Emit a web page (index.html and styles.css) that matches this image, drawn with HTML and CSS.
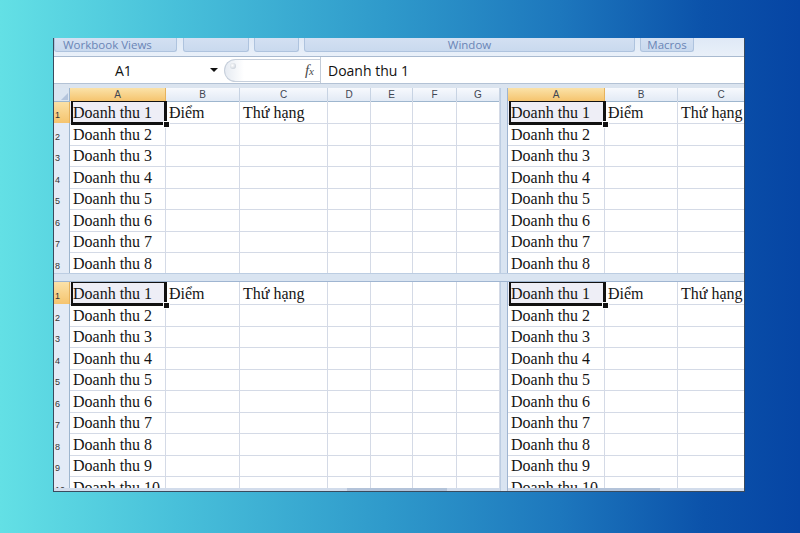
FILE: index.html
```html
<!DOCTYPE html>
<html lang="vi">
<head>
    <meta charset="UTF-8">
    <meta name="viewport" content="width=device-width, initial-scale=1.0">
    <title>Chia cửa sổ Excel</title>
    <link rel="stylesheet" href="styles.css">
</head>
<body>
    <div class="window">
        <div class="ribbon">
            <div class="group g-views">Workbook Views</div>
            <div class="group g-blank1"></div>
            <div class="group g-blank2"></div>
            <div class="group g-window">Window</div>
            <div class="group g-macros">Macros</div>
        </div>

        <div class="formula-bar">
            <div class="name-box">
                <span class="name">A1</span>
                <span class="caret"></span>
            </div>
            <div class="fx-pill">
                <span class="knob"></span>
                <span class="fx">f<small>x</small></span>
            </div>
            <div class="formula">Doanh thu 1</div>
        </div>
        <div class="bar-gap"></div>

        <div class="panes">
            <div class="pane pane-left" id="pane-tl"></div>
            <div class="vsplit"></div>
            <div class="pane pane-right" id="pane-tr"></div>
            <div class="hsplit"></div>
            <div class="pane pane-left" id="pane-bl"></div>
            <div class="vsplit"></div>
            <div class="pane pane-right" id="pane-br"></div>
        </div>

        <div class="hscroll">
            <div class="track track-left"><span class="thumb thumb-left"></span></div>
            <div class="track track-split"></div>
            <div class="track track-right"><span class="thumb thumb-right"></span></div>
        </div>
    </div>

    <script>
        const leftLetters = ['A', 'B', 'C', 'D', 'E', 'F', 'G'];
        const rightLetters = ['A', 'B', 'C'];

        function cellText(row, col) {
            if (col === 0) return 'Doanh thu ' + row;
            if (row === 1 && col === 1) return 'Điểm';
            if (row === 1 && col === 2) return 'Thứ hạng';
            return '';
        }

        function buildPane(id, letters, rowCount, withHeader, withRowHeads) {
            const pane = document.getElementById(id);
            let html = '';

            if (withHeader) {
                html += '<div class="colheads">';
                if (withRowHeads) html += '<div class="corner"></div>';
                letters.forEach((l, i) => {
                    html += `<div class="ch${i === 0 ? ' on' : ''}">${l}</div>`;
                });
                html += '</div>';
            }

            for (let r = 1; r <= rowCount; r++) {
                html += '<div class="row">';
                if (withRowHeads) html += `<div class="rh${r === 1 ? ' on' : ''}">${r}</div>`;
                letters.forEach((l, c) => {
                    const active = r === 1 && c === 0;
                    html += `<div class="cell${active ? ' active' : ''}">${cellText(r, c)}${active ? '<span class="handle"></span>' : ''}</div>`;
                });
                html += '</div>';
            }

            pane.innerHTML = html;
        }

        buildPane('pane-tl', leftLetters, 8, true, true);
        buildPane('pane-tr', rightLetters, 8, true, false);
        buildPane('pane-bl', leftLetters, 10, false, true);
        buildPane('pane-br', rightLetters, 10, false, false);
    </script>
</body>
</html>
```

FILE: styles.css
```css
body {
    margin: 0;
    width: 800px;
    height: 533px;
    overflow: hidden;
    font-family: "Open Sans", "DejaVu Sans", sans-serif;
    background: linear-gradient(90deg, #63e0e5 0%, #48c0da 22%, #2f9acb 48%, #1d77bd 70%, #0b52aa 88%, #0645a4 100%);
}

.window {
    margin: 38px 0 0 53px;
    width: 692px;
    height: 454px;
    box-sizing: border-box;
    border: 1px solid #3a4b5e;
    border-top: none;
    background: #fff;
    display: flex;
    flex-direction: column;
    overflow: hidden;
}

/* ribbon group labels */
.ribbon {
    height: 18px;
    flex-shrink: 0;
    display: flex;
    gap: 5px;
    background: linear-gradient(#dfe9f6, #e9f0f9);
    border-bottom: 1px solid #a9bad0;
}

.group {
    height: 14px;
    box-sizing: border-box;
    border: 1px solid #aec3de;
    border-top: none;
    border-radius: 0 0 3px 3px;
    background: linear-gradient(#d3e0f2, #c9d9ee);
    color: #6a85b6;
    font-size: 11.5px;
    line-height: 13px;
    white-space: nowrap;
}

.g-views { width: 123px; padding-left: 8px; margin-right: 1px; }
.g-blank1 { width: 66px; }
.g-blank2 { width: 45px; }
.g-window { width: 331px; text-align: center; }
.g-macros { width: 54px; text-align: center; }

/* formula bar */
.formula-bar {
    height: 26px;
    flex-shrink: 0;
    display: flex;
    align-items: center;
    border-bottom: 1px solid #b3c2d5;
    background: #fff;
}

.name-box {
    width: 170px;
    display: flex;
    align-items: center;
    padding-right: 6px;
    box-sizing: border-box;
}

.name {
    flex: 1;
    font-size: 14px;
    color: #111;
    padding-left: 61px;
}

.caret {
    width: 0;
    height: 0;
    border-left: 4px solid transparent;
    border-right: 4px solid transparent;
    border-top: 4px solid #111;
}

.fx-pill {
    width: 96px;
    height: 23px;
    box-sizing: border-box;
    border: 1px solid #c6cfdb;
    border-right: none;
    border-radius: 12px 0 0 12px;
    background: linear-gradient(90deg, #e6ebf2, #fff 20%);
    display: flex;
    align-items: center;
    justify-content: space-between;
    padding: 0 6px 0 5px;
}

.knob {
    width: 6px;
    height: 6px;
    border-radius: 50%;
    background: radial-gradient(circle at 40% 40%, #fff, #b8c1cd);
    margin-top: -8px;
}

.fx {
    font-family: "Liberation Serif", serif;
    font-style: italic;
    font-size: 15px;
    color: #4a4a4a;
}

.fx small {
    font-size: 11px;
}

.formula {
    flex: 1;
    height: 26px;
    box-sizing: border-box;
    border-left: 1px solid #c3ccd8;
    padding-left: 7px;
    font-size: 14px;
    line-height: 27px;
    color: #111;
}

.bar-gap {
    height: 4px;
    flex-shrink: 0;
    background: #dbe4ef;
}

/* panes */
.panes {
    flex: 1;
    min-height: 0;
    display: grid;
    grid-template-columns: 446px 8px 1fr;
    grid-template-rows: 185px 9px 1fr;
}

.pane {
    overflow: hidden;
    min-width: 0;
}

.vsplit {
    box-sizing: border-box;
    background: #d9e4f1;
    border-left: 1px solid #bccde2;
    border-right: 1px solid #9fb5d1;
}

.hsplit {
    grid-column: 1 / -1;
    box-sizing: border-box;
    background: #d9e4f1;
    border-top: 1px solid #bccde2;
    border-bottom: 1px solid #9fb5d1;
}

.colheads, .row {
    display: grid;
}

.pane-left .colheads, .pane-left .row {
    grid-template-columns: 16px 96px 74px 88px 43px 42px 44px 43px;
}

.pane-right .colheads, .pane-right .row {
    grid-template-columns: 97px 73px 87px;
}

.colheads {
    height: 13px;
}

.corner {
    position: relative;
    background: #dbe5f1;
    border-right: 1px solid #9eb6ce;
    border-bottom: 1px solid #9eb6ce;
}

.corner::after {
    content: '';
    position: absolute;
    right: 1px;
    bottom: 1px;
    border-left: 7px solid transparent;
    border-bottom: 7px solid #b3c4dc;
}

.ch {
    box-sizing: border-box;
    border-right: 1px solid #c7d3e3;
    border-bottom: 1px solid #9eb6ce;
    background: linear-gradient(#f7f9fd, #e2eaf5);
    font-family: "Liberation Sans", Arial, sans-serif;
    font-size: 10px;
    line-height: 13px;
    text-align: center;
    color: #3f4652;
}

.ch.on, .rh.on {
    background: linear-gradient(#fbe2a9, #f5c46e);
    border-color: #e6b25c;
}

.row {
    height: 21.5px;
}

.rh {
    box-sizing: border-box;
    border-right: 1px solid #9eb6ce;
    border-bottom: 1px solid #c7d3e3;
    background: #e3ebf6;
    font-family: "Liberation Sans", Arial, sans-serif;
    font-size: 9px;
    color: #333;
    padding: 0 0 3px 1px;
    display: flex;
    align-items: flex-end;
}

.cell {
    position: relative;
    box-sizing: border-box;
    border-right: 1px solid #d4dae6;
    border-bottom: 1px solid #d4dae6;
    padding: 2px 0 0 3px;
    font-family: "Liberation Serif", "Times New Roman", serif;
    font-size: 16px;
    line-height: 20px;
    color: #151515;
    white-space: nowrap;
}

.cell.active {
    background: #eeeef6;
}

.cell.active::after {
    content: '';
    position: absolute;
    left: 1px;
    top: 0;
    right: -2px;
    bottom: -2px;
    border-style: solid;
    border-color: #111;
    border-width: 1px 3px 3px 2px;
}

.handle {
    position: absolute;
    right: -5px;
    bottom: -5px;
    width: 5px;
    height: 5px;
    background: #111;
    border: 1px solid #fff;
    z-index: 1;
}

/* horizontal scroll strip */
.hscroll {
    height: 3px;
    flex-shrink: 0;
    display: grid;
    grid-template-columns: 446px 8px 1fr;
    background: #d2dceb;
}

.track {
    position: relative;
}

.track-split {
    background: #d9e4f1;
    border-left: 1px solid #bccde2;
    border-right: 1px solid #9fb5d1;
}

.thumb {
    position: absolute;
    top: 0;
    bottom: 0;
    background: #b3c3d9;
}

.thumb-left { left: 293px; width: 100px; }
.thumb-right { left: 22px; width: 130px; }
```
